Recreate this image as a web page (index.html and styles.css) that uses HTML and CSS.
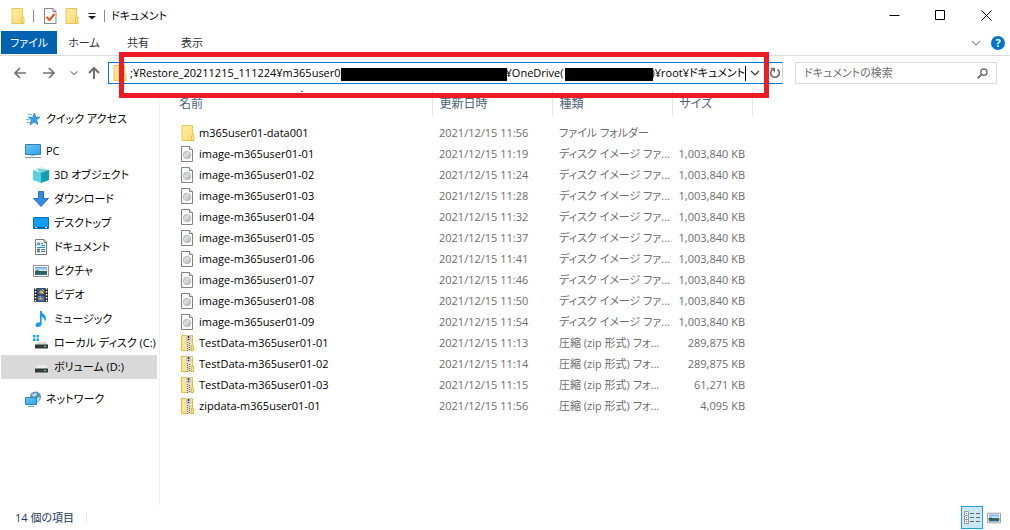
FILE: index.html
```html
<!DOCTYPE html>
<html lang="ja">
<head>
<meta charset="utf-8">
<title>ドキュメント</title>
<link rel="stylesheet" href="styles.css">
</head>
<body>
<svg class="defs" aria-hidden="true">
  <defs>
    <linearGradient id="gold" x2="1" y2="1"><stop stop-color="#ffeba5"/><stop offset="1" stop-color="#ffdb73"/></linearGradient>
    <linearGradient id="screen" x2="1" y2="1"><stop stop-color="#6cc5f8"/><stop offset="1" stop-color="#2da1ef"/></linearGradient>
    <linearGradient id="photo" x2="0" y2="1"><stop stop-color="#5aa6ef"/><stop offset=".45" stop-color="#dcecf7"/><stop offset=".55" stop-color="#37664a"/><stop offset="1" stop-color="#2e6c9c"/></linearGradient>
    <linearGradient id="disc" x2="1" y2="1"><stop stop-color="#b4b8ba"/><stop offset=".4" stop-color="#dfe1e2"/><stop offset="1" stop-color="#a4a8aa"/></linearGradient>
  </defs>
  <symbol id="folder" viewBox="0 0 16 16"><path d="M2 .5h10.500v11l1 .5v3.500H2z" fill="url(#gold)" stroke="#e9c750"/><path d="M11.500 15v-4.500l1-1h1.500V15.500H11.500z" fill="#ffe28a" stroke="#dfb83d" stroke-width=".8"/></symbol>
  <symbol id="image" viewBox="0 0 16 16"><path d="M1.500.5h8l3 3v12h-11z" fill="#fafafa" stroke="#828282"/><path d="M9.500.5v3h3" fill="#fff" stroke="#828282"/><circle cx="7" cy="9" r="3.700" fill="url(#disc)" stroke="#a5a9ab" stroke-width=".6"/><circle cx="7" cy="9" r="1" fill="#d2d5d7"/></symbol>
  <symbol id="zip" viewBox="0 0 16 16"><path d="M1.500.5h11v11h1v4h-12z" fill="url(#gold)" stroke="#e3bd3c"/><path d="M11.500 15v-4.500h2V15.500z" fill="#ffe28a" stroke="#dfb83d" stroke-width=".8"/><path d="M6 0h5v5l-1 2H7L6 5z" fill="#c7cbce"/><path d="M8.500 1v2M8.500 4v1" stroke="#30363b" stroke-width="1.400"/><path d="M8.500 6.500V16" stroke="#e4e4e4" stroke-width="4"/><path d="M7.500 7V16M9.500 8V16" stroke="#6b7176" stroke-width="1.300" stroke-dasharray="1 1"/></symbol>
  <symbol id="picture" viewBox="0 0 16 16"><path d="M.5 2.500h15v11H.5z" fill="#fff" stroke="#929292"/><path d="M2 4h12v8H2z" fill="url(#photo)"/><path d="M2 8c3-2 4 1 12 1v1H2z" fill="#2e624c"/></symbol>
  <symbol id="chevron" viewBox="0 0 10 10"><path d="M1 3l4 4 4-4" fill="none" stroke="currentColor" stroke-width="1.200"/></symbol>
</svg>

<div class="window">
  <header class="titlebar">
    <svg class="icon app"><use href="#folder"/></svg>
    <span class="bar"></span>
    <button class="bare" aria-label="プロパティ"><svg class="icon" viewBox="0 0 16 16"><path d="M2.500.5h8.500l3 3v12H2.500z" fill="#fff" stroke="#858585"/><path d="M11 .5v3h3" fill="none" stroke="#858585"/><path d="M4.500 9l3 3 5-6" fill="none" stroke="#e8501e" stroke-width="2"/></svg></button>
    <button class="bare" aria-label="新しいフォルダー"><svg class="icon"><use href="#folder"/></svg></button>
    <button class="bare more" aria-label="カスタマイズ"><svg class="mini" viewBox="0 0 8 8"><path d="M.5 1.500h7" stroke="#222"/><path d="M0 4h8L4 7.500z" fill="#222"/></svg></button>
    <span class="bar"></span>
    <h1 class="title">ドキュメント</h1>
    <div class="controls">
      <button class="bare control" aria-label="最小化"><svg class="glyph" viewBox="0 0 11 11"><path d="M.5 5.500h10" stroke="#000"/></svg></button>
      <button class="bare control" aria-label="最大化"><svg class="glyph" viewBox="0 0 11 11"><path d="M.5.5h9v9h-9z" fill="none" stroke="#000"/></svg></button>
      <button class="bare control" aria-label="閉じる"><svg class="glyph" viewBox="0 0 11 11"><path d="M.5.5l10 10M10.500.5l-10 10" stroke="#000"/></svg></button>
    </div>
  </header>

  <nav class="tabs">
    <button class="bare tab file">ファイル</button>
    <button class="bare tab">ホーム</button>
    <button class="bare tab">共有</button>
    <button class="bare tab">表示</button>
    <div class="tools">
      <button class="bare muted" aria-label="リボンの展開"><svg class="small"><use href="#chevron"/></svg></button>
      <button class="bare help" aria-label="ヘルプ">?</button>
    </div>
  </nav>

  <div class="navbar">
    <div class="arrows">
      <button class="bare" aria-label="戻る"><svg class="arrow" viewBox="0 0 14 14"><path d="M13 7H2M7 2L2 7l5 5" fill="none" stroke="#727272" stroke-width="1.700"/></svg></button>
      <button class="bare" aria-label="進む"><svg class="arrow" viewBox="0 0 14 14"><path d="M1 7h11M7 2l5 5-5 5" fill="none" stroke="#727272" stroke-width="1.700"/></svg></button>
      <button class="bare recent" aria-label="最近の場所"><svg class="mini"><use href="#chevron"/></svg></button>
      <button class="bare" aria-label="上へ"><svg class="arrow" viewBox="0 0 14 14"><path d="M7 13V2M2 7l5-5 5 5" fill="none" stroke="#727272" stroke-width="2"/></svg></button>
    </div>
    <div class="address">
      <svg class="icon"><use href="#folder"/></svg>
      <input class="path" type="text" aria-label="アドレス" value=";¥Restore_20211215_111224¥m365user0&emsp;&emsp;&emsp;&emsp;&emsp;&emsp;&emsp;&emsp;&emsp;&emsp;&emsp;&emsp;&emsp;&emsp;&emsp;¥OneDrive(&emsp;&emsp;&emsp;&emsp;&emsp;&emsp;&emsp;&emsp;)¥root¥ドキュメント">
      <button class="bare history" aria-label="履歴"><svg class="small"><use href="#chevron"/></svg></button>
      <button class="bare refresh" aria-label="更新"><svg class="reload" viewBox="0 0 12 12"><path d="M8.500 2.500a4.300 4.300 0 1 1-5 0" fill="none" stroke="#777" stroke-width="1.700"/><path d="M1 .8h5v5L4.500 4.200 3.500 3z" fill="#777"/></svg></button>
      <span class="mask mask-user"></span>
      <span class="mask mask-drive"></span>
      <span class="caret"></span>
      <span class="frame"></span>
    </div>
    <div class="search">
      <input class="query" type="search" aria-label="検索" placeholder="ドキュメントの検索">
      <svg class="glyph" viewBox="0 0 12 12"><circle cx="7.500" cy="4.500" r="3.400" fill="none" stroke="#707070" stroke-width="1.500"/><path d="M5 7L.8 11.200" stroke="#707070" stroke-width="2"/></svg>
    </div>
  </div>

  <div class="main">
    <nav class="sidebar">
      <a class="place" href="#"><svg class="icon" viewBox="0 0 16 16"><path d="M9.500 2l1.300 4.200H15l-3.400 2.600 1.200 4.700-3.700-2.600-4.200 3 1.500-5L3.500 6.200H8z" fill="#349ee8" stroke="#1776b9" stroke-width=".7"/><path d="M3 3.500h4M1 8.500h3.500M2 11.500h3" stroke="#6dbdf1"/></svg>クイック アクセス</a>
      <div class="group">
        <a class="place" href="#"><svg class="icon" viewBox="0 0 16 16"><path d="M.5 1.500h15v10H.5z" fill="url(#screen)" stroke="#397eaa"/><path d="M0 14.500h16" stroke="#8297a6"/><path d="M6 12.500h4" stroke="#a8b9c4"/></svg>PC</a>
        <a class="place sub" href="#"><svg class="icon" viewBox="0 0 16 16"><path d="M0 3l8-3 8 3-8 3z" fill="#c4f4f5"/><path d="M0 3l8 3v10l-8-3z" fill="#5ad1de"/><path d="M16 3L8 6v10l8-3z" fill="#13a6ba"/><path d="M4 1.500l8 13L16 13V3z" fill="#078ba7" opacity=".35"/></svg>3D オブジェクト</a>
        <a class="place sub" href="#"><svg class="icon" viewBox="0 0 16 16"><path d="M5.500.5h5v7h5L8 15.500.5 7.500h5z" fill="#338de0" stroke="#2474c1"/></svg>ダウンロード</a>
        <a class="place sub" href="#"><svg class="icon" viewBox="0 0 16 16"><path d="M.5 2.500h15v11H.5z" fill="#119cf8" stroke="#0873bd"/><path d="M1 12.500h14" stroke="#0d558a"/><path d="M2 12.500h2M12 12.500h2" stroke="#bfe7ff"/></svg>デスクトップ</a>
        <a class="place sub" href="#"><svg class="icon" viewBox="0 0 16 16"><path d="M2.500.5h8.500l2.500 2.500v12.500h-11z" fill="#fff" stroke="#7b7b7b"/><path d="M11 .5v3h3" fill="none" stroke="#7b7b7b"/><path d="M4 6.500l1-3h1l1 3M4.500 5.500h2M8 4.500h2M8 6.500h4M4 8.500h8M8 10.500h4M8 12.500h4" fill="none" stroke="#2789bd"/><path d="M4 10.500h3M4 12.500h3" stroke="#58616a" stroke-width="1.500"/></svg>ドキュメント</a>
        <a class="place sub" href="#"><svg class="icon"><use href="#picture"/></svg>ピクチャ</a>
        <a class="place sub" href="#"><svg class="icon" viewBox="0 0 16 16"><path d="M1 1h14v14H1z" fill="#2b2b2b"/><path d="M4.500 1.500h7v6h-7z" fill="#3768a8"/><path d="M4.500 8.500h7v6h-7z" fill="#416bbf"/><path d="M2.500 1v14M13.500 1v14" stroke="#fff" stroke-width="1.500" stroke-dasharray="1.500 1.500"/><path d="M6 6l2-3 3 2-1 2zM5 12l3-2 2 3z" fill="#dfad3b"/><path d="M9 2l2 2M6 10l2-1" stroke="#7ec95a"/></svg>ビデオ</a>
        <a class="place sub" href="#"><svg class="icon" viewBox="0 0 16 16"><path d="M7 0h1.500c.5 3 5 4 4.500 8-.1 1-.6 2-1.300 3 .4-3.400-.7-4.500-3-5v7.200C8.300 15 6.800 16 5 16c-1.600 0-2.600-.9-2.400-2.300C2.900 12 5.200 11 7 11.500z" fill="#159bed"/></svg>ミュージック</a>
        <a class="place sub" href="#"><svg class="icon" viewBox="0 0 16 16"><path d="M0 0h2.500v2.500H0zM3.500 0H6v2.500H3.500zM0 3.500h2.500V6H0zM3.500 3.500H6V6H3.500z" fill="#0fa5e8"/><path d="M5 7h8l2 3H2z" fill="#d5d8da"/><path d="M2 9.500h13v4H2z" fill="#353b3d"/><path d="M11 11.500h2" stroke="#53e56a"/></svg>ローカル ディスク (C:)</a>
        <a class="place sub selected" href="#"><svg class="icon" viewBox="0 0 16 16"><path d="M4 6h9l2 3.500H2z" fill="#ececec"/><path d="M2 9.500h13v4H2z" fill="#353b3d"/><path d="M11 11.500h2" stroke="#53e56a"/></svg>ボリューム (D:)</a>
      </div>
      <a class="place" href="#"><svg class="icon" viewBox="0 0 16 16"><circle cx="10.500" cy="6" r="5.500" fill="#5794b9"/><path d="M7 3c3 0 3-2 5-1l-1 3-3 1zM11 7l4-1-1 4-3 1z" fill="#bad9e6"/><path d="M.5 6.500h11v7H.5z" fill="url(#screen)" stroke="#3283b4"/><path d="M3 15.500h6" stroke="#5eadd8"/></svg>ネットワーク</a>
    </nav>

    <main class="content">
      <table class="files">
        <thead><tr><th class="name">名前<span class="sort"></span></th><th class="date">更新日時</th><th class="type">種類</th><th class="size">サイズ</th></tr></thead>
        <tbody>
          <tr><td><span class="entry"><svg class="icon"><use href="#folder"/></svg>m365user01-data001</span></td><td>2021/12/15 11:56</td><td>ファイル フォルダー</td><td></td></tr>
          <tr><td><span class="entry"><svg class="icon"><use href="#image"/></svg>image-m365user01-01</span></td><td>2021/12/15 11:19</td><td>ディスク イメージ ファ...</td><td>1,003,840 KB</td></tr>
          <tr><td><span class="entry"><svg class="icon"><use href="#image"/></svg>image-m365user01-02</span></td><td>2021/12/15 11:24</td><td>ディスク イメージ ファ...</td><td>1,003,840 KB</td></tr>
          <tr><td><span class="entry"><svg class="icon"><use href="#image"/></svg>image-m365user01-03</span></td><td>2021/12/15 11:28</td><td>ディスク イメージ ファ...</td><td>1,003,840 KB</td></tr>
          <tr><td><span class="entry"><svg class="icon"><use href="#image"/></svg>image-m365user01-04</span></td><td>2021/12/15 11:32</td><td>ディスク イメージ ファ...</td><td>1,003,840 KB</td></tr>
          <tr><td><span class="entry"><svg class="icon"><use href="#image"/></svg>image-m365user01-05</span></td><td>2021/12/15 11:37</td><td>ディスク イメージ ファ...</td><td>1,003,840 KB</td></tr>
          <tr><td><span class="entry"><svg class="icon"><use href="#image"/></svg>image-m365user01-06</span></td><td>2021/12/15 11:41</td><td>ディスク イメージ ファ...</td><td>1,003,840 KB</td></tr>
          <tr><td><span class="entry"><svg class="icon"><use href="#image"/></svg>image-m365user01-07</span></td><td>2021/12/15 11:46</td><td>ディスク イメージ ファ...</td><td>1,003,840 KB</td></tr>
          <tr><td><span class="entry"><svg class="icon"><use href="#image"/></svg>image-m365user01-08</span></td><td>2021/12/15 11:50</td><td>ディスク イメージ ファ...</td><td>1,003,840 KB</td></tr>
          <tr><td><span class="entry"><svg class="icon"><use href="#image"/></svg>image-m365user01-09</span></td><td>2021/12/15 11:54</td><td>ディスク イメージ ファ...</td><td>1,003,840 KB</td></tr>
          <tr><td><span class="entry"><svg class="icon"><use href="#zip"/></svg>TestData-m365user01-01</span></td><td>2021/12/15 11:13</td><td>圧縮 (zip 形式) フォ...</td><td>289,875 KB</td></tr>
          <tr><td><span class="entry"><svg class="icon"><use href="#zip"/></svg>TestData-m365user01-02</span></td><td>2021/12/15 11:14</td><td>圧縮 (zip 形式) フォ...</td><td>289,875 KB</td></tr>
          <tr><td><span class="entry"><svg class="icon"><use href="#zip"/></svg>TestData-m365user01-03</span></td><td>2021/12/15 11:15</td><td>圧縮 (zip 形式) フォ...</td><td>61,271 KB</td></tr>
          <tr><td><span class="entry"><svg class="icon"><use href="#zip"/></svg>zipdata-m365user01-01</span></td><td>2021/12/15 11:56</td><td>圧縮 (zip 形式) フォ...</td><td>4,095 KB</td></tr>
        </tbody>
      </table>
    </main>
  </div>

  <footer class="status">
    <span class="count">14 個の項目</span>
    <div class="views">
      <button class="bare view active" aria-label="詳細"><svg class="details" viewBox="0 0 18 16"><path d="M1.500 1.500h4v4h-4zM1.500 5.500h4v4h-4zM1.500 9.500h4v4h-4z" fill="#fff" stroke="#999"/><path d="M7 3.500h4M13 3.500h4M7 7.500h4M13 7.500h4M7 11.500h4M13 11.500h4" stroke="#666"/><path d="M3 3.500h1" stroke="#357"/><path d="M3 7.500h1" stroke="#38b"/><path d="M3 11.500h1" stroke="#b33"/></svg></button>
      <button class="bare view" aria-label="大アイコン"><svg class="large"><use href="#picture"/></svg></button>
    </div>
  </footer>
</div>
</body>
</html>
```

FILE: styles.css
```css
* { box-sizing: border-box; }

body {
  margin: 0;
  background: #fff;
  color: #000;
  font: 11px/16px "Open Sans", "Noto Sans", "Noto Sans CJK JP", sans-serif;
  font-feature-settings: "palt";
}

svg { display: block; flex: none; }
.defs { position: absolute; width: 0; height: 0; }
.icon { width: 16px; height: 16px; }
.arrow { width: 14px; height: 14px; }
.glyph { width: 11px; height: 11px; }
.reload { width: 12px; height: 12px; }
.small { width: 10px; height: 10px; }
.mini { width: 8px; height: 8px; }

.bare {
  display: flex;
  align-items: center;
  justify-content: center;
  padding: 0;
  border: 0;
  background: none;
  color: #333;
  font: inherit;
  font-feature-settings: inherit;
}

.window { display: flex; flex-direction: column; min-height: 100vh; }

.titlebar { display: flex; align-items: center; gap: 6px; height: 31px; padding: 0 1px 0 10px; }
.bar { width: 1px; height: 12px; background: #888; }
.app { margin-right: 1px; }
.titlebar .bar + .bare { margin-left: 2px; }
.more { width: 12px; }
.title { margin: 0; font: inherit; }
.controls { display: flex; margin-left: auto; }
.control { width: 46px; height: 31px; }

.tabs { display: flex; height: 25px; padding-left: 1px; border-bottom: 1px solid #dadbdc; }
.tab { min-width: 54px; height: 23px; color: #333; }
.file { width: 56px; background: #0063b1; color: #fff; }
.tools { display: flex; align-items: center; gap: 10px; margin-left: auto; padding-right: 5px; }
.muted { color: #999; }
.help { width: 14px; height: 14px; border-radius: 50%; background: #0073cf; color: #fff; font-weight: 700; }

.navbar { display: flex; height: 35px; padding: 6px 13px 7px; }
.arrows { display: flex; align-items: center; gap: 15px; width: 87px; }
.recent { margin: 0 -6px 0 -1px; }
.address {
  position: relative;
  display: flex;
  align-items: center;
  flex: 1;
  margin: 0 12px 0 8px;
  border: 1px solid #0078d7;
  border-right-color: #d9d9d9;
}
.address > .icon { margin-left: 3px; }
.path, .query {
  flex: 1;
  min-width: 0;
  padding: 0;
  border: 0;
  outline: 0;
  background: none;
  color: #000;
  font: inherit;
  font-feature-settings: inherit;
}
.path { padding-left: 2px; }
.history { width: 20px; }
.refresh { width: 14px; margin-left: 3px; }
.mask { position: absolute; top: 5px; height: 13px; background: #000; }
.mask-user { left: 232px; width: 166px; }
.mask-drive { left: 456px; width: 88px; }
.caret { position: absolute; top: 3px; left: 636px; width: 1px; height: 15px; background: #000; }
.frame { position: absolute; top: -11px; bottom: -15px; left: 10px; right: 13px; border: 5px solid #ed1c24; }
.search { display: flex; align-items: center; width: 202px; padding: 0 8px; border: 1px solid #d9d9d9; }
.query::placeholder { color: #6d6d6d; opacity: 1; }

.main { display: flex; flex: 1; }
.sidebar { display: flex; flex-direction: column; gap: 8px; width: 160px; padding: 16px 2px 0 1px; border-right: 1px solid #f2f2f2; }
.place { display: flex; align-items: center; gap: 5px; height: 24px; padding-left: 24px; color: #000; text-decoration: none; white-space: nowrap; }
.sub { padding-left: 32px; }
.selected { background: #d9d9d9; }

.content { flex: 1; padding-left: 12px; }
.files { width: 580px; border-collapse: collapse; table-layout: fixed; }
.files th { height: 25px; padding: 0 7px; border-right: 1px solid #e5e5e5; color: #4c607a; font-size: 12px; font-weight: 400; text-align: left; }
.name { position: relative; width: 260px; }
.date, .type { width: 120px; }
.size { width: 80px; }
.sort { position: absolute; top: 0; left: 129px; width: 2px; height: 1px; background: #777; }
.files tbody::before { content: ""; display: block; height: 6px; }
.files td { height: 21px; padding: 0 7px; color: #6d6d6d; white-space: nowrap; }
.files td:last-child { padding-left: 0; text-align: right; }
.entry { display: flex; align-items: center; gap: 3px; padding-left: 1px; color: #000; }

.status { display: flex; align-items: center; height: 25px; padding: 0 5px 0 15px; color: #1e395b; }
.count { padding-right: 12px; border-right: 1px solid #e8e8e8; line-height: 11px; }
.views { display: flex; margin-left: auto; }
.view { width: 22px; height: 23px; }
.active { border: 1px solid #26a0da; background: #cbe8f6; }
.details { width: 18px; height: 16px; }
.large { width: 14px; height: 14px; }
```
